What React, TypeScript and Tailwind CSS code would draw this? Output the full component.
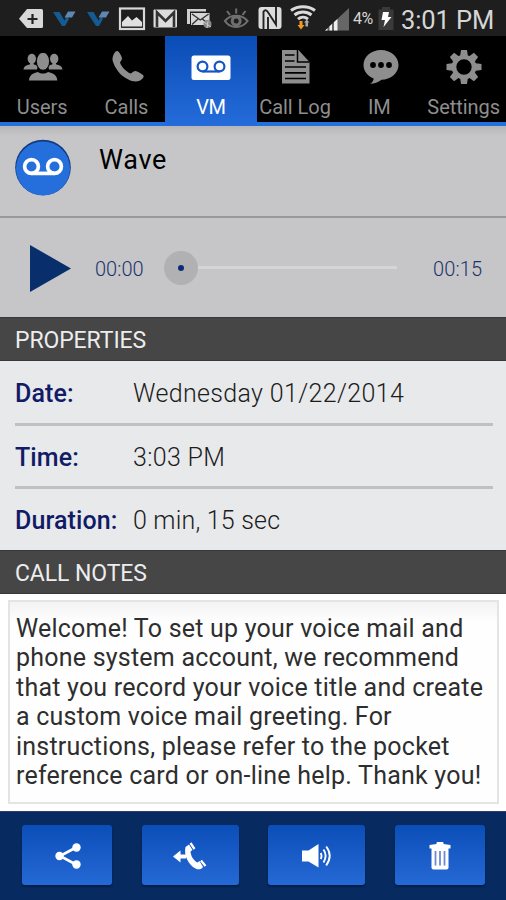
import type { ReactNode } from "react";
import clsx from "clsx";

const TABS = [
  { label: "Users", icon: <UsersIcon /> },
  { label: "Calls", icon: <CallsIcon /> },
  { label: "VM", icon: <VoicemailIcon />, active: true },
  { label: "Call Log", icon: <CallLogIcon /> },
  { label: "IM", icon: <ImIcon /> },
  { label: "Settings", icon: <SettingsIcon /> },
];

const PROPERTIES = [
  { label: "Date:", value: "Wednesday 01/22/2014", spacing: "tracking-[0.35px]" },
  { label: "Time:", value: "3:03 PM", spacing: "tracking-[0.3px]" },
  { label: "Duration:", value: "0 min, 15 sec", spacing: "tracking-[0.2px]" },
];

const NOTES = [
  "Welcome! To set up your voice mail and",
  "phone system account, we recommend",
  "that you record your voice title and create",
  "a custom voice mail greeting. For",
  "instructions, please refer to the pocket",
  "reference card or on-line help. Thank you!",
];

function UsersIcon() {
  return (
    <svg width="40" height="30" viewBox="0 0 40 30" fill="currentColor" className="ml-[2px]">
      <ellipse cx="8.800" cy="6.800" rx="4.200" ry="5" />
      <ellipse cx="31.200" cy="6.800" rx="4.200" ry="5" />
      <path d="M.5 17.500c.4-3.500 3-4.600 6.300-5.100l.5-2h3l.5 2c2 .3 3 .8 3.800 2L14 17.500zM39.500 17.500c-.4-3.500-3-4.600-6.300-5.100l-.5-2h-3l-.5 2c-2 .3-3 .8-3.800 2L26 17.500z" />
      <ellipse cx="20" cy="9.300" rx="6.600" ry="9" stroke="#000" strokeWidth="1" />
      <path d="M6 28.500c.3-5.500 4-7.500 9-8.500 3 2 7 2 10 0 5 1 9 3 9.300 8.500z" />
    </svg>
  );
}

function CallsIcon() {
  return (
    <svg width="34" height="34" viewBox="0 0 34 34" fill="currentColor" className="ml-[4px]">
      <path d="M2.200 5.500C3.500 2.200 5 .8 6.500 1c1.800.8 3.500 4 4.500 7 .3 1.700-1.400 3-2 4.600 1.500 4.500 6 9 10.500 11 1.600-.4 3.200-2.500 5-2.500 3 .8 6.500 2.800 7.900 4.400 1 1.400-1.200 4-3.900 5.300-3 1.300-7.500 1-11.600-1.500C9.500 26 3.600 18 1.600 10.500c-.2-2 0-3.500.6-5z" />
    </svg>
  );
}

function VoicemailIcon() {
  return (
    <svg width="40" height="26" viewBox="0 0 40 26" className="mt-[2px]">
      <rect x="0.500" y="0.500" width="39" height="24.500" rx="2.500" fill="#fff" />
      <g fill="none" stroke="#1555c4" strokeWidth="2.200">
        <circle cx="11.500" cy="11.500" r="4.900" />
        <circle cx="28.500" cy="11.500" r="4.900" />
        <path d="M11.500 16.500h17" />
      </g>
    </svg>
  );
}

function CallLogIcon() {
  return (
    <svg width="28" height="34" viewBox="0 0 28 34" className="ml-[2px]">
      <path d="M0 0h16.500L27.500 12v21.500H0z" fill="currentColor" />
      <path d="M15.500 0v12h12" fill="none" stroke="#000" strokeWidth="1.500" />
      <path d="M3 5h9.500M3 11h9.500M3 17h21M3 22.800h21M3 28.500h21" stroke="#000" strokeWidth="1.700" />
    </svg>
  );
}

function ImIcon() {
  return (
    <svg width="36" height="34" viewBox="0 0 36 34" className="ml-[3px]">
      <path d="M18 0c9.500 0 17.500 6.500 17.500 15S27.500 29.500 18.500 29.800C15 32.500 11.500 33.600 7 33.800c2.500-1.500 3.500-3 3.700-5.300C4.500 26 .5 21 .5 15 .5 6.500 8.500 0 18 0z" fill="currentColor" />
      <circle cx="10" cy="15" r="2.900" />
      <circle cx="18" cy="15" r="2.900" />
      <circle cx="26" cy="15" r="2.900" />
    </svg>
  );
}

function SettingsIcon() {
  return (
    <svg width="36" height="34" viewBox="-18 -17 36 34" className="ml-[1px]">
      <g fill="currentColor">
        <path d="M-4-10l1-7h6l1 7zM-4 10l1 7h6l1-7zM-10-4l-7.500 1v6l7.500 1zM10-4l7.500 1v6l-7.500 1z" />
        <path d="M-4-10l1-7h6l1 7zM-4 10l1 7h6l1-7zM-10-4l-7 1v6l7 1zM10-4l7 1v6l-7 1z" transform="rotate(45)" />
      </g>
      <circle r="10" fill="#000" stroke="currentColor" strokeWidth="4.600" />
    </svg>
  );
}

// Each glyph is drawn in bar coordinates; x is where its slot starts.
function StatusIcon({ x, width, children }: { x: number; width: number; children: ReactNode }) {
  return (
    <svg width={width} height="36" viewBox={`${x} 0 ${width} 36`} className="shrink-0">
      {children}
    </svg>
  );
}

function Check({ x }: { x: number }) {
  return (
    <g transform={`translate(${x} 0)`}>
      <path d="M0 12h6.500l5 8.500L14 16l2 3-4 7H9z" fill="#155a92" />
      <path d="M15 11.500h7.500L19 17.500h-7.500z" fill="#5f88b0" />
    </g>
  );
}

function StatusBar() {
  return (
    <div className="flex h-9 items-center bg-[#1e1e1e] text-[#d6d6d6]">
      <StatusIcon x={0} width={48}>
        <path d="M27 9h14.500q1.500 0 1.500 1.500v16q0 1.500-1.500 1.500H27l-8-9.200z" fill="#d8d8d8" />
        <path d="M32.500 14v10M27.500 19h10" stroke="#222" strokeWidth="2.200" />
      </StatusIcon>
      <StatusIcon x={48} width={32}>
        <Check x={53} />
      </StatusIcon>
      <StatusIcon x={80} width={35}>
        <Check x={87} />
      </StatusIcon>
      <StatusIcon x={115} width={33}>
        <rect x="120" y="8.500" width="24" height="20.500" fill="none" stroke="#d8d8d8" strokeWidth="2.200" />
        <path d="M122 26.500V22l6-6 4 4.500 4.500-3.500 5.500 5v4.500z" fill="#e0e0e0" />
      </StatusIcon>
      <StatusIcon x={148} width={34}>
        <rect x="153.500" y="9.500" width="23.500" height="18" rx="1" fill="#dcdcdc" />
        <path d="M157 27V12.500l8.500 8.500 8.500-8.500V27" fill="none" stroke="#333" strokeWidth="2.600" />
      </StatusIcon>
      <StatusIcon x={182} width={36}>
        <path d="M187 9h19v2.500h-16V24h-3z" fill="#cfcfcf" />
        <path d="M191 13h18.500v12H191z" fill="#d6d6d6" />
        <path d="M192 14l8.300 6 8.300-6M192 24.500l6-5.500M208.500 24.500l-6-5.500" fill="none" stroke="#333" strokeWidth="1.400" />
        <circle cx="207.500" cy="24" r="4" fill="#888" />
        <path d="M204 22l7 5M207 28l1-7" stroke="#ccc" strokeWidth="1" />
      </StatusIcon>
      <StatusIcon x={218} width={35}>
        <g fill="none" stroke="#6f6f6f">
          <path d="M225 21c5-7 17-7 22.500 0-5.500 8-17.500 8-22.500 0z" strokeWidth="2.200" />
          <path d="M236.200 8.500v5M227 11l3 4M245.500 11l-3 4" strokeWidth="2" />
          <circle cx="236.200" cy="21" r="4" strokeWidth="3" />
        </g>
      </StatusIcon>
      <StatusIcon x={253} width={32}>
        <rect x="258.500" y="7" width="23" height="22" rx="3" fill="#dcdcdc" />
        <path d="M263.500 29V11.500q2-2.500 4 0l8.500 13V7M268 29V17" fill="none" stroke="#222" strokeWidth="1.900" />
      </StatusIcon>
      <StatusIcon x={285} width={35}>
        <g fill="none" stroke="#dadada" strokeWidth="3">
          <path d="M291 10.500c7-5 17-5 24 0M294.500 15c5-4 12-4 17 0M298 19.200c3-2.600 7-2.600 10 0" />
        </g>
        <path d="M299.500 21h3v4h2l-3.500 4.500-3.500-4.500h2z" fill="#f09a1c" />
        <path d="M305.500 26.500v-4h-1.500l2.700-3 2.700 3H308v4z" fill="#a9a9a9" />
      </StatusIcon>
      <StatusIcon x={320} width={33}>
        <path d="M325 30.500L349 8v22.500z" fill="#666" />
        <path d="M325 30.500l2.500-2.300v2.300zM329.500 30.500v-4.200l2.500-2.300v6.500zM334 30.500v-8.400l3.500-3.200v11.600z" fill="#eee" />
      </StatusIcon>
      <span className="mt-[2px] w-[23px] whitespace-nowrap text-[16px] leading-9 tracking-[-0.5px]">4%</span>
      <StatusIcon x={376} width={20}>
        <path d="M382 7h8v2.500h3.500V30h-15V9.500h3.500z" fill="#3a3a3a" />
        <path d="M383 12h6l-1 5h3.500l-8 10 1.500-7h-3.500z" fill="#fff" />
      </StatusIcon>
      <span className="ml-[5px] mt-[3px] whitespace-nowrap text-[25.5px] leading-8 tracking-[-0.1px]">3:01 PM</span>
    </div>
  );
}

function TabBar() {
  return (
    <nav className="flex h-[90px] border-b-4 border-[#2470dc] bg-black">
      {TABS.map((tab) => (
        <button
          key={tab.label}
          className={clsx(
            "flex flex-col items-center",
            tab.active
              ? "-mx-[4px] -mb-1 w-[92.3px] bg-linear-to-b from-[#0a4cb5] to-[#246cdb] text-white"
              : "w-[84.3px] text-[#8e8e8e]"
          )}
        >
          <span className="flex h-[60px] items-center pt-[2px]">{tab.icon}</span>
          <span
            className={clsx(
              "-mt-[1px] whitespace-nowrap text-xl leading-6",
              tab.active ? "tracking-[-0.7px]" : "tracking-[-0.05px]"
            )}
          >
            {tab.label}
          </span>
        </button>
      ))}
    </nav>
  );
}

function Caller() {
  return (
    <div className="flex h-[92px] border-b-2 border-[#98989a] bg-linear-to-b from-[#b6b6b8] to-[#c6c6c8] to-[10px] pl-[15px]">
      <svg width="56" height="58" viewBox="0 0 56 58" className="mt-[13px]">
        <circle cx="28" cy="28.500" r="27.800" fill="#123a80" />
        <circle cx="28" cy="29.500" r="27" fill="#256fdc" />
        <g fill="none" stroke="#fff" strokeWidth="3.700">
          <circle cx="16.500" cy="27.500" r="6.900" />
          <circle cx="39.500" cy="27.500" r="6.900" />
          <path d="M16.500 34.400h23" />
        </g>
      </svg>
      <h1 className="ml-[28px] mt-[18px] text-[27px] leading-8 tracking-[0.7px] text-black">Wave</h1>
    </div>
  );
}

function Player() {
  return (
    <div className="flex h-[99px] items-center bg-[#c6c6c8] pl-[30px] text-xl text-[#1d326b]">
      <svg width="41" height="47" viewBox="0 0 41 47" className="mt-[2px]">
        <path d="M0 0l41 23.500L0 47z" fill="#082f6b" />
      </svg>
      <span className="ml-[24px] mt-[2px] w-[69px] font-light">00:00</span>
      <div className="flex size-[34px] items-center justify-center rounded-full bg-[#b1b1b3]">
        <div className="size-[6px] rounded-full bg-[#0a2c78]" />
      </div>
      <div className="h-[3px] w-[199px] bg-[#d5d5d7]" />
      <span className="ml-[36px] mt-[2px] font-light tracking-[0.1px]">00:15</span>
    </div>
  );
}

function SectionTitle({ children }: { children: ReactNode }) {
  return (
    <h2 className="h-[44px] border-y border-[#383838] bg-[#464646] pl-[15px] text-[23px] leading-[45px] tracking-[-0.1px] text-[#ededed]">
      {children}
    </h2>
  );
}

function Properties() {
  return (
    <dl className="h-[189px] bg-[#e8e9eb] pl-[15px] pr-[13px] pt-[1px] text-[25px]">
      {PROPERTIES.map((item) => (
        <div
          key={item.label}
          className="flex h-[63.5px] items-center border-b-3 border-[#bfc0c2] pt-[3px] last:h-[62px] last:border-b-0 last:pt-[2px]"
        >
          <dt className="w-[118px] whitespace-nowrap font-medium tracking-[0.1px] text-[#111b66]">{item.label}</dt>
          <dd className={clsx("whitespace-nowrap font-light text-[#1c1c1c]", item.spacing)}>{item.value}</dd>
        </div>
      ))}
    </dl>
  );
}

function CallNotes() {
  return (
    <div className="h-[217px] bg-white px-2 pt-[6px]">
      <div className="mr-[-1px] h-[204px] border-2 border-[#e4e4e4] bg-linear-to-b from-[#f3f3f3] to-[#fefefe] to-[20px] pl-[6px] pt-[11.5px] text-[25px] leading-[29.5px] tracking-[0.22px] text-[#2e2e2e]">
        {NOTES.map((line) => (
          <p key={line} className="whitespace-nowrap">
            {line}
          </p>
        ))}
      </div>
    </div>
  );
}

function ActionButton({ label, wide, children }: { label: string; wide?: boolean; children: ReactNode }) {
  return (
    <button
      aria-label={label}
      className={clsx(
        "flex h-[60px] items-center justify-center rounded-[3px] bg-linear-to-b from-[#0b4eb8] to-[#2569d6] pl-[1px] pt-[2px] shadow-[0_2px_2px_#041d49]",
        wide ? "w-[97px]" : "w-[90px]"
      )}
    >
      {children}
    </button>
  );
}

function ActionBar() {
  return (
    <footer className="flex h-[89px] justify-between border-t border-[#2c416a] bg-[#072b60] pl-[22px] pr-[21px] pt-[13px]">
      <ActionButton label="Share">
        <svg width="26" height="26" viewBox="0 0 26 26" fill="#fff">
          <path d="M21 4.500L5 13l16 8.500" fill="none" stroke="#fff" strokeWidth="2.600" />
          <circle cx="4.500" cy="13" r="4.200" />
          <circle cx="21.500" cy="4.500" r="4.200" />
          <circle cx="21.500" cy="21.500" r="4.200" />
        </svg>
      </ActionButton>
      <ActionButton label="Call back" wide>
        <svg width="34" height="28" viewBox="0 0 34 28" fill="#fff" className="-ml-[2px]">
          <path d="M0 14.500l7.500-6v4H13v4H7.500v4z" />
          <path d="M12.500 5l3.500-2.500 3.500 5.500-2 1.500c.3 4.500 3 9 7 11l2-1.500 3.500 6c-1.500 2.500-4.500 3-7.500 1.500C15.500 23 10.500 13 12.500 5z" />
          <path d="M17.500 1l4 6M28 18.500l4.500 5.500" fill="none" stroke="#fff" strokeWidth="2.300" />
        </svg>
      </ActionButton>
      <ActionButton label="Speaker" wide>
        <svg width="30" height="24" viewBox="0 0 30 24" fill="#fff">
          <path d="M0 6.500h6.500L16.500 0v23.500L6.500 17.500H0z" />
          <g fill="none" stroke="#fff" strokeWidth="1.900">
            <path d="M18.700 9q1.600 3 0 6M21.500 5.500q4.200 6.200 0 13M24.200 2.500q7 9 0 19" />
          </g>
        </svg>
      </ActionButton>
      <ActionButton label="Delete">
        <svg width="22" height="28" viewBox="0 0 22 28">
          <path d="M.5 3l7-1V1q0-1 1-1h5q1 0 1 1v1l7 1v3.500H.5z" fill="#fff" />
          <path d="M2.500 6h17v19.500q0 2-2 2h-13q-2 0-2-2z" fill="#fff" />
          <path d="M6.500 9v14.500M11 9v14.500M15.500 9v14.500" stroke="#6d8bd0" strokeWidth="1.800" />
        </svg>
      </ActionButton>
    </footer>
  );
}

export default function App() {
  return (
    <main className="h-[900px] w-[506px] overflow-hidden bg-white font-['Roboto',sans-serif]">
      <StatusBar />
      <TabBar />
      <Caller />
      <Player />
      <SectionTitle>PROPERTIES</SectionTitle>
      <Properties />
      <SectionTitle>CALL NOTES</SectionTitle>
      <CallNotes />
      <ActionBar />
    </main>
  );
}
